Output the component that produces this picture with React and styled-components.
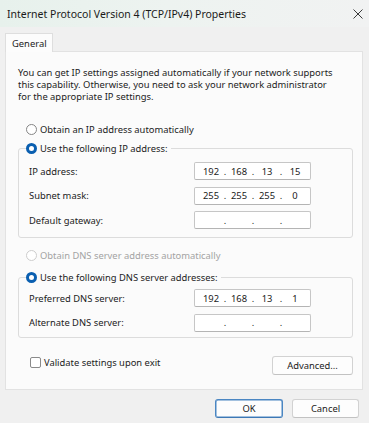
import React from 'react';
import styled, { createGlobalStyle } from 'styled-components';

const GlobalStyle = createGlobalStyle`
  body {
    margin: 0;
    background: #f0f0f0;
  }
`;

const Window = styled.div`
  width: 369px;
  height: 423px;
  display: flex;
  flex-direction: column;
  background: #f0f0f0;
  color: #1b1b1b;
  font-family: "Noto Sans", "Open Sans", sans-serif;
  font-size: 9.4px;
  overflow: hidden;
`;

const TitleBar = styled.div`
  height: 27px;
  display: flex;
  align-items: center;
  justify-content: space-between;
  padding: 0 6px 0 7px;
  background: linear-gradient(90deg, #e7f1ec 0%, #edf3f0 45%, #f1f2f2 100%);
`;

const Title = styled.span`
  font-size: 10.5px;
  color: #1a1a1a;
`;

const CloseIcon = () => (
  <svg width="10" height="10" viewBox="0 0 10 10">
    <path d="M0.5 0.5 L9.5 9.5 M9.5 0.5 L0.5 9.5" stroke="#3a3a3a" strokeWidth="1" fill="none" />
  </svg>
);

const Body = styled.div`
  flex: 1;
  display: flex;
  flex-direction: column;
  padding: 6px 6px 0 5px;
`;

const TabStrip = styled.div`
  display: flex;
  height: 18px;
`;

const Tab = styled.div`
  width: 48px;
  box-sizing: border-box;
  padding: 3px 0 0 6px;
  background: #fcfcfc;
  border: 1px solid #dedede;
  border-bottom: none;
  margin-bottom: -1px;
  position: relative;
  z-index: 1;
`;

const Panel = styled.div`
  height: 339px;
  box-sizing: border-box;
  background: #fbfbfb;
  border: 1px solid #e2e2e2;
  padding: 15px 9px 0 12px;
  display: flex;
  flex-direction: column;
`;

const Intro = styled.p`
  margin: 0;
  line-height: 12px;
  white-space: nowrap;
`;

const OptionRow = styled.label`
  display: flex;
  align-items: center;
  gap: 3px;
  height: 12px;
  margin: ${(p) => p.$margin || '0'};
  padding-left: ${(p) => (p.$inset ? '0' : '8px')};
  color: ${(p) => (p.$disabled ? '#a3a3a3' : 'inherit')};
  white-space: nowrap;
`;

const RadioDot = styled.span`
  width: 11px;
  height: 11px;
  box-sizing: border-box;
  border-radius: 50%;
  flex: none;
  background: #fff;
  border: 1px solid ${(p) => (p.$disabled ? '#cdcdcd' : '#858585')};
  ${(p) =>
    p.$checked &&
    `
    border: 3.5px solid #0a5fb0;
    background: #fff;
  `}
`;

const Group = styled.fieldset`
  margin: ${(p) => p.$margin};
  padding: ${(p) => p.$pad};
  border: 1px solid #dcdcdc;
  border-radius: 3px;
  min-width: 0;
  display: grid;
  grid-template-columns: 165px 117px;
  row-gap: 6.5px;
  align-items: center;
`;

const Legend = styled.legend`
  margin-left: -3px;
  padding: 0 3px 0 0;
`;

const FieldLabel = styled.span`
  white-space: nowrap;
`;

const IpBox = styled.div`
  height: 18px;
  box-sizing: border-box;
  display: flex;
  align-items: center;
  padding: 0 3px 0 4px;
  background: #fff;
  border: 1px solid #c6c6c6;
  border-bottom-color: #b4b4b4;
  border-radius: 2px;
`;

const Octet = styled.span`
  flex: 1;
  text-align: center;
`;

const Dot = styled.span`
  width: 4px;
  text-align: center;
`;

const BottomRow = styled.div`
  display: flex;
  justify-content: space-between;
  align-items: flex-start;
  margin-top: 19px;
  padding-left: 12px;
`;

const CheckRow = styled.label`
  display: flex;
  align-items: center;
  gap: 3px;
  height: 12px;
`;

const CheckBox = styled.span`
  width: 11px;
  height: 11px;
  box-sizing: border-box;
  border: 1px solid #8a8a8a;
  border-radius: 2px;
  background: #fff;
`;

const Button = styled.button`
  width: ${(p) => p.$width}px;
  height: 19px;
  box-sizing: border-box;
  margin-top: ${(p) => p.$top || 0}px;
  padding: 0;
  font: inherit;
  color: #1b1b1b;
  background: #fdfdfd;
  border: 1px solid ${(p) => (p.$primary ? '#4a86c2' : '#d2d2d2')};
  border-bottom-color: ${(p) => (p.$primary ? '#3d78b5' : '#c2c2c2')};
  border-radius: 3px;
  box-shadow: ${(p) => (p.$primary ? 'inset 0 0 0 0.5px #4a86c2' : 'none')};
`;

const Footer = styled.div`
  display: flex;
  justify-content: flex-end;
  gap: 9px;
  padding: 9px 4px 0 0;
`;

function Radio({ label, checked, disabled, margin }) {
  return (
    <OptionRow $margin={margin} $disabled={disabled}>
      <RadioDot $checked={checked} $disabled={disabled} />
      {label}
    </OptionRow>
  );
}

function IpField({ value }) {
  const parts = value ? value.split('.') : ['', '', '', ''];
  return (
    <IpBox>
      {parts.map((part, i) => (
        <React.Fragment key={i}>
          {i > 0 && <Dot>.</Dot>}
          <Octet>{part}</Octet>
        </React.Fragment>
      ))}
    </IpBox>
  );
}

const ipRows = [
  ['IP address:', '192.168.13.15'],
  ['Subnet mask:', '255.255.255.0'],
  ['Default gateway:', ''],
];

const dnsRows = [
  ['Preferred DNS server:', '192.168.13.1'],
  ['Alternate DNS server:', ''],
];

export default function App() {
  return (
    <>
      <GlobalStyle />
      <Window>
        <TitleBar>
          <Title>Internet Protocol Version 4 (TCP/IPv4) Properties</Title>
          <CloseIcon />
        </TitleBar>
        <Body>
          <TabStrip>
            <Tab>General</Tab>
          </TabStrip>
          <Panel>
            <Intro>
              You can get IP settings assigned automatically if your network supports<br />
              this capability. Otherwise, you need to ask your network administrator<br />
              for the appropriate IP settings.
            </Intro>
            <Radio label="Obtain an IP address automatically" margin="20px 0 0 0" />
            <Group $margin="7px 0 0 0" $pad="8px 10px 8px 10px">
              <Legend>
                <OptionRow $inset>
                  <RadioDot $checked />
                  Use the following IP address:
                </OptionRow>
              </Legend>
              {ipRows.map(([label, value]) => (
                <React.Fragment key={label}>
                  <FieldLabel>{label}</FieldLabel>
                  <IpField value={value} />
                </React.Fragment>
              ))}
            </Group>
            <Radio label="Obtain DNS server address automatically" disabled margin="11px 0 0 0" />
            <Group $margin="10px 0 0 0" $pad="6px 10px 5px 10px">
              <Legend>
                <OptionRow $inset>
                  <RadioDot $checked />
                  Use the following DNS server addresses:
                </OptionRow>
              </Legend>
              {dnsRows.map(([label, value]) => (
                <React.Fragment key={label}>
                  <FieldLabel>{label}</FieldLabel>
                  <IpField value={value} />
                </React.Fragment>
              ))}
            </Group>
            <BottomRow>
              <CheckRow>
                <CheckBox />
                Validate settings upon exit
              </CheckRow>
              <Button $width={81} $top={-1}>Advanced...</Button>
            </BottomRow>
          </Panel>
          <Footer>
            <Button $width={68} $primary>OK</Button>
            <Button $width={67}>Cancel</Button>
          </Footer>
        </Body>
      </Window>
    </>
  );
}
